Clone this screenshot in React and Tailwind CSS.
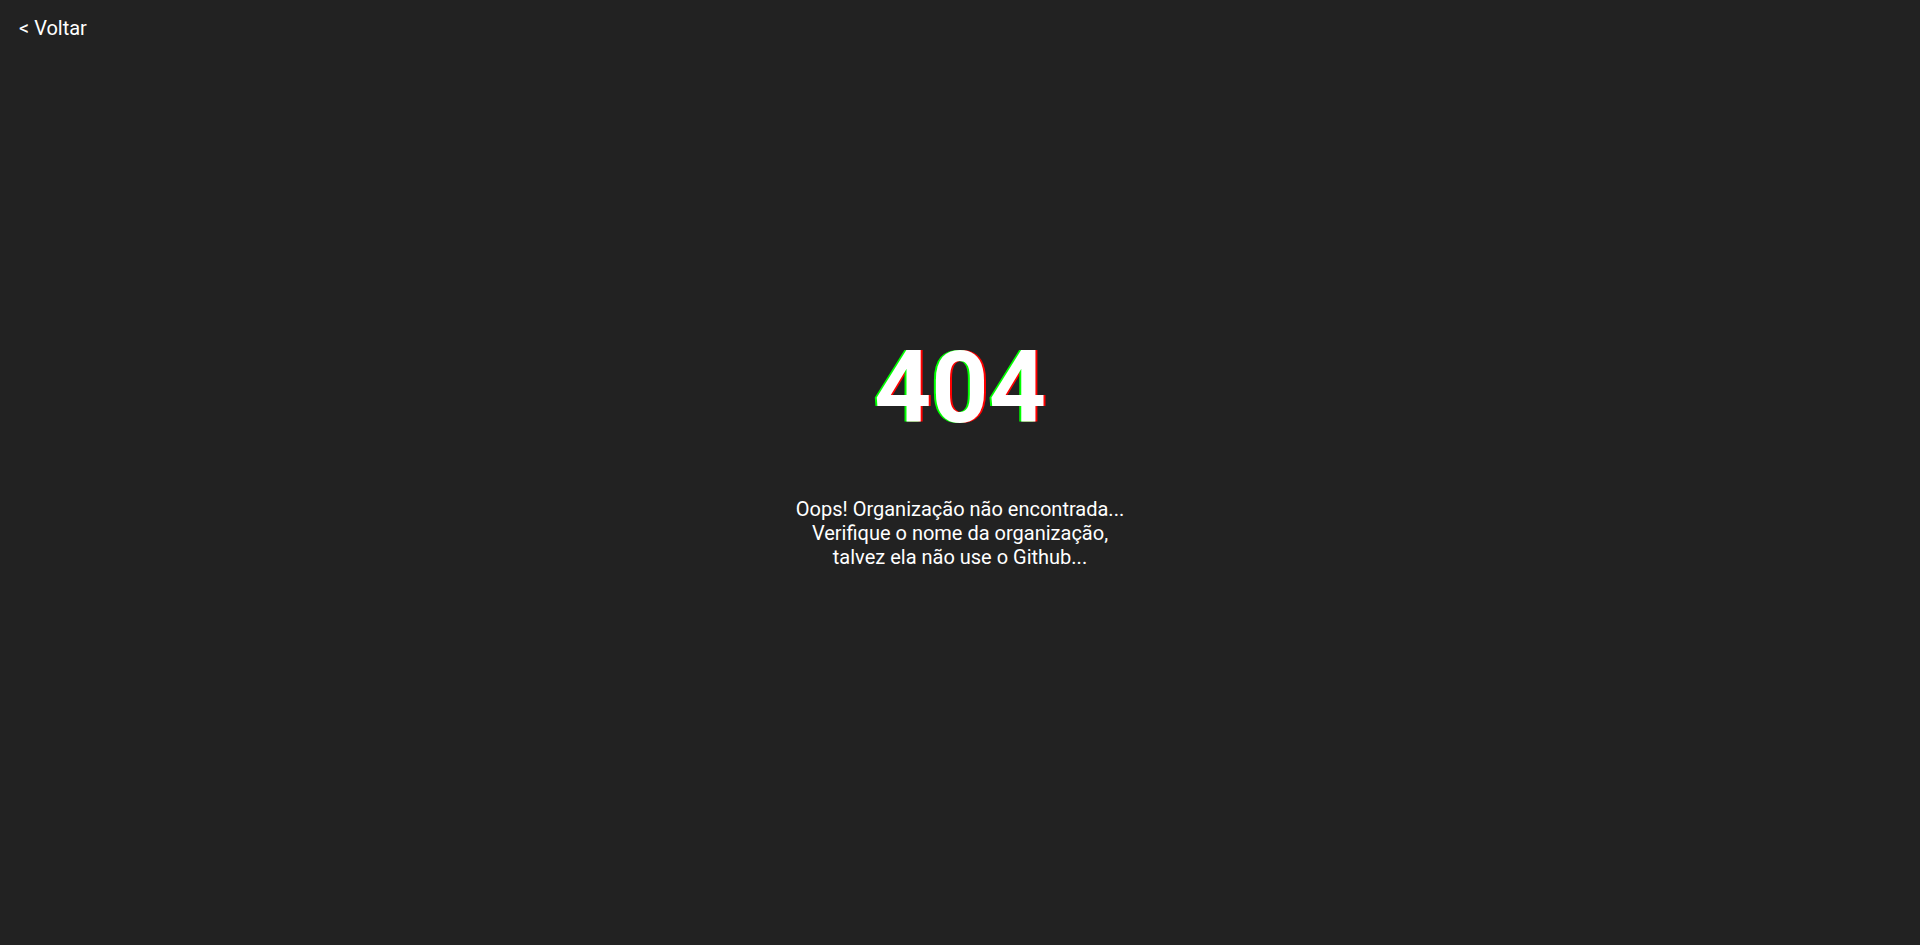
export default function App() {
  return (
    <div
      className="relative flex h-[945px] w-full flex-col bg-[#222222] text-white"
      style={{ fontFamily: "Roboto, 'Noto Sans', sans-serif" }}
    >
      {/* back link */}
      <div className="px-[19px] pt-[14px]">
        <a href="#" className="text-[20px] leading-[28px] text-white">
          &lt; Voltar
        </a>
      </div>

      {/* 404 content */}
      <div className="flex flex-1 flex-col items-center justify-center pb-[80px]">
        <h1 className="text-[100px] font-bold leading-none [text-shadow:-2px_0_#00ff00,2px_0_#ff0000]">
          404
        </h1>
        <p className="mt-[59px] text-center text-[20px] leading-[24px]">
          Oops! Organização não encontrada...
          <br />
          Verifique o nome da organização,
          <br />
          talvez ela não use o Github...
        </p>
      </div>
    </div>
  );
}
